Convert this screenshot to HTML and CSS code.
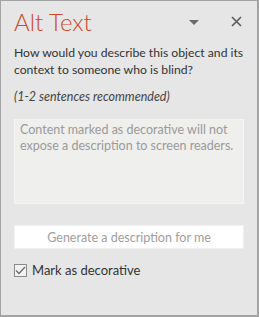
FILE: index.html
```html
<!DOCTYPE html>
<html>
<head>
<meta charset="utf-8">
<link rel="stylesheet" href="styles.css">
</head>
<body>
<div class="pane">
  <div class="header">
    <h1 class="title">Alt Text</h1>
    <div class="tools">
      <svg class="caret" width="10" height="5" viewBox="0 0 10 5"><polygon points="0,0 10,0 5,5" fill="#6a6a6a"/></svg>
      <svg class="close" width="11" height="11" viewBox="0 0 11 11"><path d="M1 1 L10 10 M10 1 L1 10" stroke="#5a5a5a" stroke-width="1.6" fill="none"/></svg>
    </div>
  </div>
  <p class="question">How would you describe this object and its context to someone who is blind?</p>
  <p class="hint">(1-2 sentences recommended)</p>
  <div class="textarea">Content marked as decorative will not expose a description to screen readers.</div>
  <div class="button">Generate a description for me</div>
  <label class="check">
    <span class="box"><svg width="11" height="9" viewBox="0 0 11 9"><path d="M1 4.5 L4 7.5 L10 1" stroke="#6d6d6d" stroke-width="1.3" fill="none"/></svg></span>
    <span class="label">Mark as decorative</span>
  </label>
</div>
</body>
</html>
```
FILE: styles.css
```css
html, body {
  margin: 0;
  padding: 0;
}
body {
  width: 259px;
  height: 317px;
  background: #e6e6e6;
  font-family: "Lato", "Open Sans", sans-serif;
}
.pane {
  box-sizing: border-box;
  width: 259px;
  height: 317px;
  border: 1px solid #a3a3a3;
  border-right-width: 2px;
  border-bottom-width: 2px;
  background: #e6e6e6;
  padding: 0 13px 0 13px;
  display: flex;
  flex-direction: column;
}
.header {
  display: flex;
  align-items: center;
  justify-content: space-between;
  height: 36px;
  margin-top: 2px;
}
.title {
  margin: 0;
  font-weight: 300;
  font-size: 24px;
  color: #d24726;
}
.tools {
  display: flex;
  align-items: center;
  gap: 32px;
  margin-right: 2px;
}
.caret { margin-top: 2px; }
.question {
  margin: 5px -6px 0 0;
  font-size: 12.2px;
  line-height: 17px;
  color: #333333;
}
.hint {
  margin: 10px 0 0 0;
  font-size: 12.5px;
  line-height: 17px;
  font-style: italic;
  color: #444444;
}
.textarea {
  margin-top: 14px;
  height: 85px;
  box-sizing: border-box;
  background: #efefed;
  border: 1px solid #f4f4f4;
  padding: 2px 5px;
  font-size: 12.5px;
  line-height: 16px;
  color: #9a9a9a;
}
.button {
  margin-top: 21px;
  height: 24px;
  background: #ffffff;
  border: 1px solid #f0f0f0;
  box-sizing: border-box;
  display: flex;
  align-items: center;
  justify-content: center;
  font-size: 12.5px;
  color: #a0a0a0;
}
.check {
  margin-top: 13px;
  display: flex;
  align-items: center;
  gap: 5px;
}
.box {
  box-sizing: border-box;
  width: 13px;
  height: 13px;
  border: 1px solid #8a8a8a;
  background: #f2f2f2;
  display: flex;
  align-items: center;
  justify-content: center;
}
.label {
  font-size: 13px;
  color: #333333;
}
```
